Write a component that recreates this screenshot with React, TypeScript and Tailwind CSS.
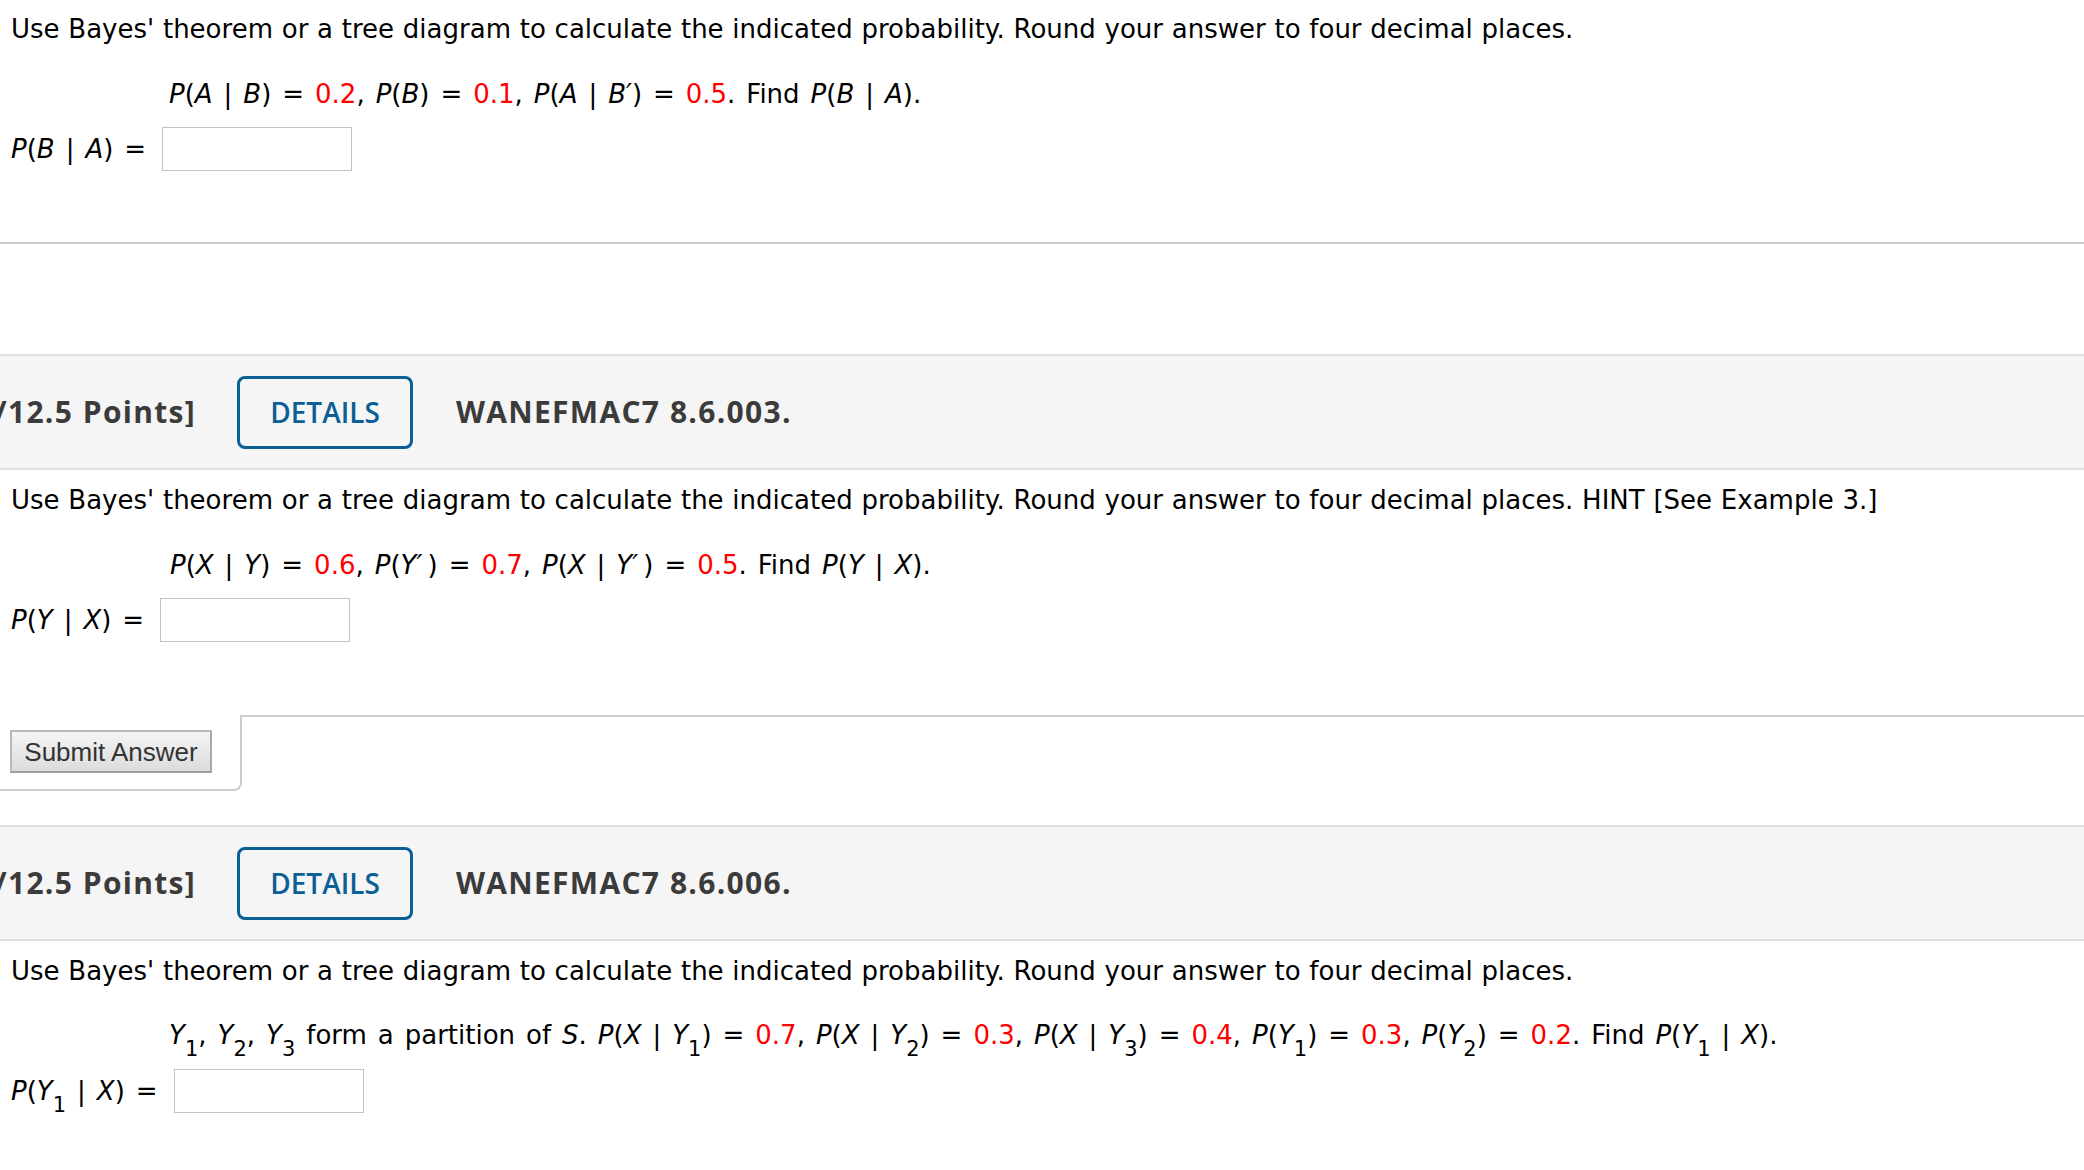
import type { ReactNode } from "react";

const body = "font-['DejaVu_Sans',Verdana,sans-serif] text-[26px] leading-[30px] text-black [word-spacing:0.5px]";
const math = "whitespace-nowrap [word-spacing:2.7px]";

function V({ children }: { children: ReactNode }) {
  return <i className="italic">{children}</i>;
}

function R({ children }: { children: ReactNode }) {
  return <span className="text-[#ff0000]">{children}</span>;
}

function S({ children }: { children: ReactNode }) {
  return <sub className="bottom-[-12px] text-[21px]">{children}</sub>;
}

function AnswerRow({ label }: { label: ReactNode }) {
  return (
    <div className="flex items-center gap-[16px]">
      <span className={math}>{label}</span>
      <input type="text" className="h-[44px] w-[190px] border border-[#c2c2c2] bg-white outline-none" />
    </div>
  );
}

function Header({ code }: { code: string }) {
  return (
    <div className="flex h-[116px] items-center border-y-2 border-[#e0e0e0] bg-[#f5f5f5] font-['Open_Sans',sans-serif] text-[28px]">
      <div className="flex w-[196px] shrink-0 justify-end overflow-hidden">
        <span className="whitespace-nowrap text-[30px] font-bold tracking-[1.3px] text-[#3b3b3b]">[-/12.5 Points]</span>
      </div>
      <button className="ml-[41px] h-[73px] w-[176px] shrink-0 rounded-[8px] border-[3px] border-[#0b5f95] font-semibold text-[#0b5f95]">
        DETAILS
      </button>
      <span className="ml-[43px] whitespace-nowrap text-[30px] font-bold tracking-[1.3px] text-[#3b3b3b]">{code}</span>
    </div>
  );
}

export default function App() {
  return (
    <div className={`min-h-[1170px] w-full overflow-hidden bg-white ${body}`}>
      {/* question 1 (tail) */}
      <section className="border-b-2 border-[#cccccc] px-[11px] pb-[71px] pt-[14px]">
        <p className="whitespace-nowrap">
          Use Bayes' theorem or a tree diagram to calculate the indicated probability. Round your answer to four decimal places.
        </p>
        <p className={`mt-[35px] pl-[158px] ${math}`}>
          <V>P</V>(<V>A</V> | <V>B</V>) = <R>0.2</R>, <V>P</V>(<V>B</V>) = <R>0.1</R>, <V>P</V>(<V>A</V> | <V>B′</V>) = <R>0.5</R>. Find{" "}
          <V>P</V>(<V>B</V> | <V>A</V>).
        </p>
        <div className="mt-[18px]">
          <AnswerRow
            label={
              <>
                <V>P</V>(<V>B</V> | <V>A</V>) =
              </>
            }
          />
        </div>
      </section>

      {/* question 2 */}
      <div className="mt-[110px]">
        <Header code="WANEFMAC7 8.6.003." />
      </div>
      <section className="px-[11px] pt-[15px]">
        <p className="whitespace-nowrap">
          Use Bayes' theorem or a tree diagram to calculate the indicated probability. Round your answer to four decimal places. HINT [See Example 3.]
        </p>
        <p className={`mt-[35px] pl-[159px] ${math}`}>
          <V>P</V>(<V>X</V> | <V>Y</V>) = <R>0.6</R>, <V>P</V>(<V>Y′</V>{"\u2009"}) = <R>0.7</R>, <V>P</V>(<V>X</V> | <V>Y′</V>{"\u2009"}) = <R>0.5</R>.
          Find <V>P</V>(<V>Y</V> | <V>X</V>).
        </p>
        <div className="mt-[18px]">
          <AnswerRow
            label={
              <>
                <V>P</V>(<V>Y</V> | <V>X</V>) =
              </>
            }
          />
        </div>
      </section>
      <div className="mt-[73px] flex h-[76px]">
        <div className="w-[242px] shrink-0 rounded-br-[8px] border-b-2 border-r-2 border-[#cccccc] pl-[10px] pt-[15px]">
          <button className="h-[43px] w-[202px] border-2 border-[#bababa] border-b-[#9e9e9e] border-r-[#a8a8a8] bg-gradient-to-b from-[#f5f5f5] to-[#dcdcdc] font-['Liberation_Sans',Arial,sans-serif] text-[26px] leading-none text-[#333333] [word-spacing:0px]">
            Submit Answer
          </button>
        </div>
        <div className="flex-1 border-t-2 border-[#cccccc]" />
      </div>

      {/* question 3 */}
      <div className="mt-[34px]">
        <Header code="WANEFMAC7 8.6.006." />
      </div>
      <section className="px-[11px] pt-[15px]">
        <p className="whitespace-nowrap">
          Use Bayes' theorem or a tree diagram to calculate the indicated probability. Round your answer to four decimal places.
        </p>
        <p className={`mt-[34px] pl-[158px] ${math}`}>
          <V>Y</V>
          <S>1</S>, <V>Y</V>
          <S>2</S>, <V>Y</V>
          <S>3</S> form a partition of <V>S</V>. <V>P</V>(<V>X</V> | <V>Y</V>
          <S>1</S>) = <R>0.7</R>, <V>P</V>(<V>X</V> | <V>Y</V>
          <S>2</S>) = <R>0.3</R>, <V>P</V>(<V>X</V> | <V>Y</V>
          <S>3</S>) = <R>0.4</R>, <V>P</V>(<V>Y</V>
          <S>1</S>) = <R>0.3</R>, <V>P</V>(<V>Y</V>
          <S>2</S>) = <R>0.2</R>. Find <V>P</V>(<V>Y</V>
          <S>1</S> | <V>X</V>).
        </p>
        <div className="mt-[19px]">
          <AnswerRow
            label={
              <>
                <V>P</V>(<V>Y</V>
                <S>1</S> | <V>X</V>) =
              </>
            }
          />
        </div>
      </section>
    </div>
  );
}
